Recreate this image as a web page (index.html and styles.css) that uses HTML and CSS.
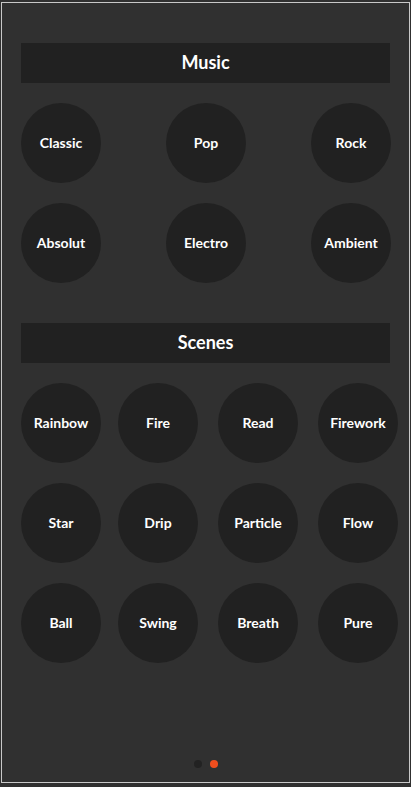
FILE: index.html
```html
<!DOCTYPE html>
<html lang="en">
<head>
    <meta charset="UTF-8">
    <meta name="viewport" content="width=device-width, initial-scale=1.0">
    <title>Modes</title>
    <link rel="stylesheet" href="styles.css">
</head>
<body>
    <div class="frame">
        <h2 class="section-title">Music</h2>
        <div class="grid music">
            <div class="mode">Classic</div>
            <div class="mode">Pop</div>
            <div class="mode">Rock</div>
            <div class="mode">Absolut</div>
            <div class="mode">Electro</div>
            <div class="mode">Ambient</div>
        </div>

        <h2 class="section-title scenes-title">Scenes</h2>
        <div class="grid scenes">
            <div class="mode">Rainbow</div>
            <div class="mode">Fire</div>
            <div class="mode">Read</div>
            <div class="mode">Firework</div>
            <div class="mode">Star</div>
            <div class="mode">Drip</div>
            <div class="mode">Particle</div>
            <div class="mode">Flow</div>
            <div class="mode">Ball</div>
            <div class="mode">Swing</div>
            <div class="mode">Breath</div>
            <div class="mode">Pure</div>
        </div>

        <div class="pager">
            <span class="dot"></span>
            <span class="dot active"></span>
        </div>
    </div>
</body>
</html>
```

FILE: styles.css
```css
html, body {
    height: 100%;
}
body {
    margin: 0;
    padding: 2px 1px 4px 1px;
    box-sizing: border-box;
    background-color: #303030;
    font-family: Lato, "Liberation Sans", sans-serif;
    color: #fff;
}
.frame {
    height: 100%;
    box-sizing: border-box;
    border: 1px solid #c8c8c8;
    padding: 40px 19px 14px 19px;
    display: flex;
    flex-direction: column;
}
.section-title {
    margin: 0;
    height: 40px;
    box-sizing: border-box;
    padding-bottom: 2px;
    line-height: 38px;
    background-color: #212121;
    text-align: center;
    font-size: 18px;
    font-weight: bold;
}
.scenes-title {
    margin-top: 40px;
}
.grid {
    display: grid;
    row-gap: 20px;
    margin-top: 20px;
}
.music {
    grid-template-columns: 145px 145px 80px;
}
.scenes {
    grid-template-columns: 97px 100px 100px 80px;
}
.mode {
    width: 80px;
    height: 80px;
    box-sizing: border-box;
    padding-bottom: 2px;
    border-radius: 50%;
    background-color: #212121;
    display: flex;
    align-items: center;
    justify-content: center;
    font-size: 14px;
    font-weight: bold;
}
.pager {
    margin-top: auto;
    display: flex;
    justify-content: center;
    gap: 8px;
}
.dot {
    width: 8px;
    height: 8px;
    border-radius: 50%;
    background-color: #222;
}
.dot.active {
    background-color: #f04e1e;
}
```
